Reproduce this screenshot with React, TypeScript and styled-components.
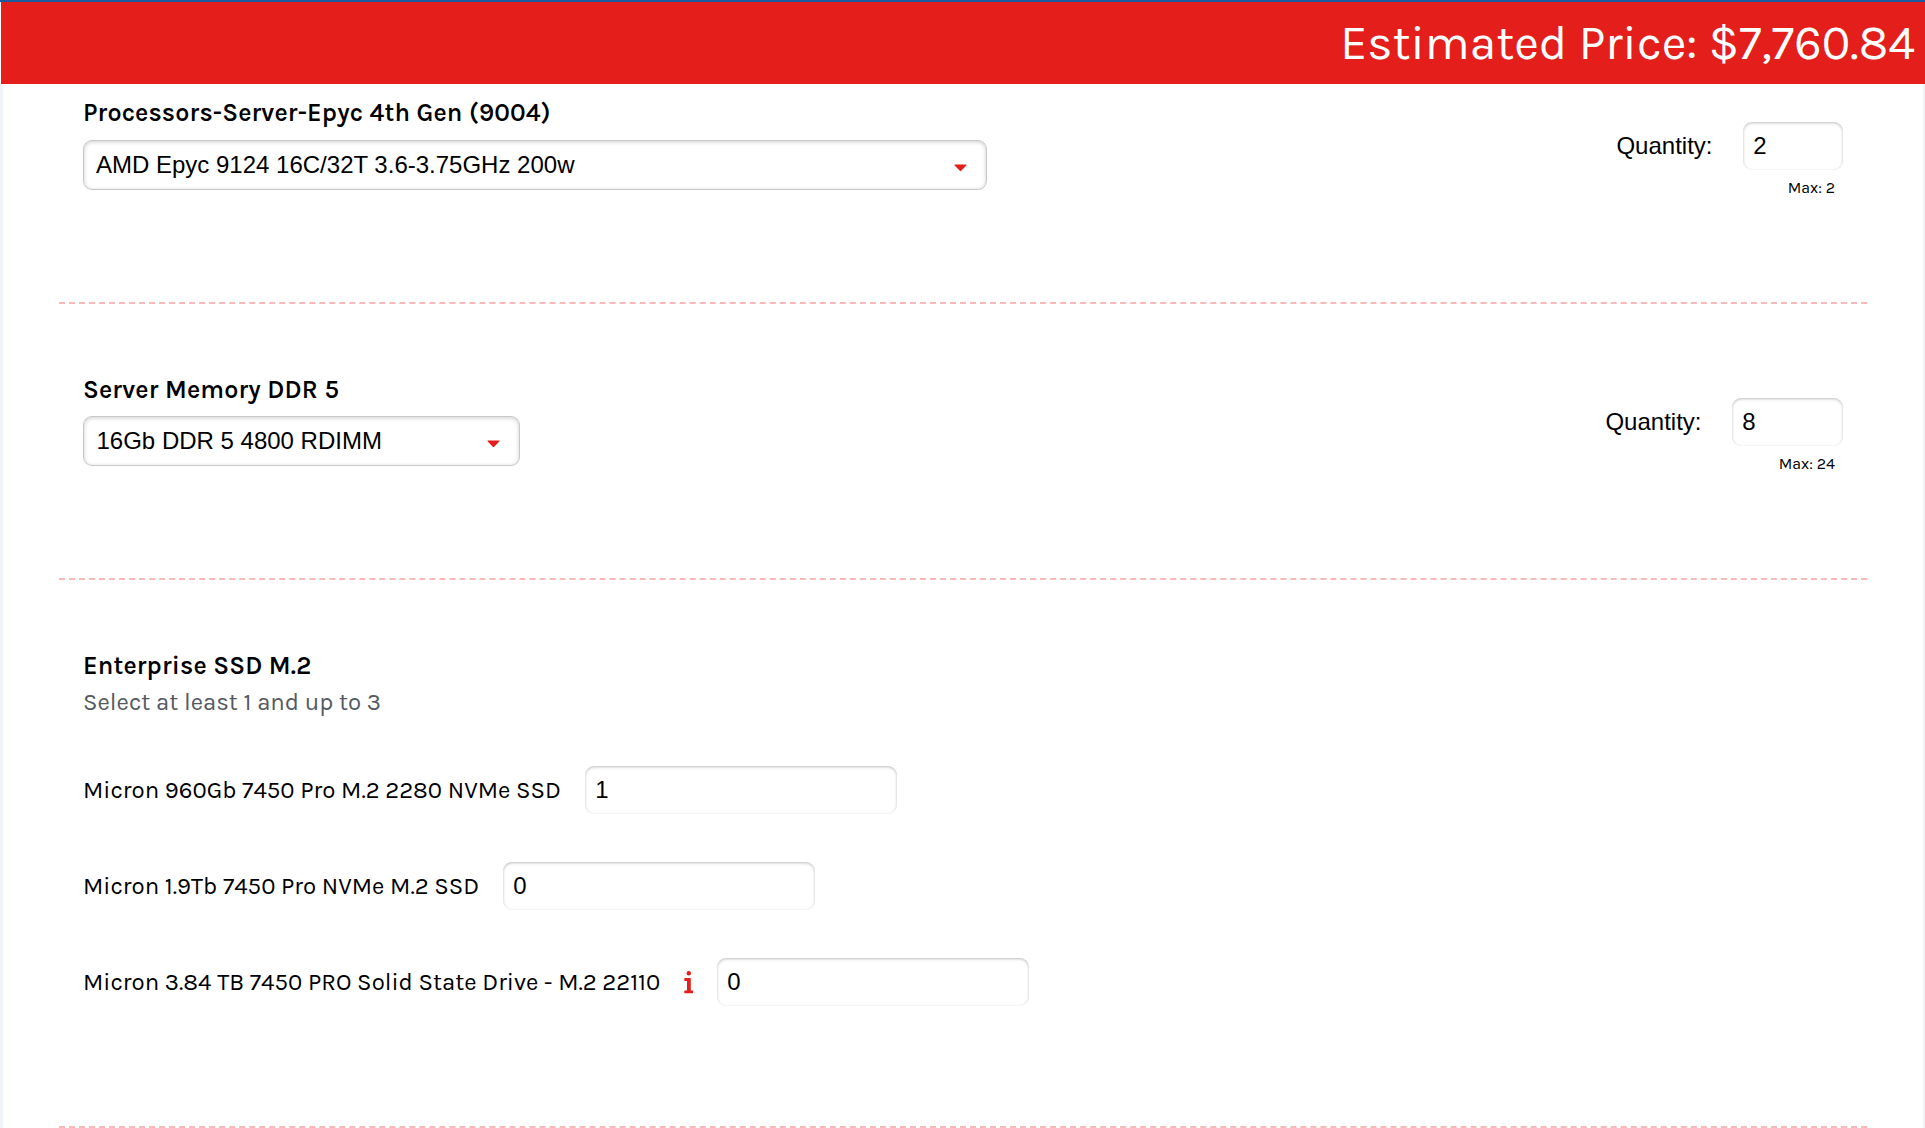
import React from 'react';
import styled, { createGlobalStyle } from 'styled-components';

const sans = '"Karla", "Inter", "Liberation Sans", sans-serif';
const arial = '"Liberation Sans", Arial, sans-serif';
const red = '#e31e1b';

const GlobalStyle = createGlobalStyle`
  * { box-sizing: border-box; }
  body { margin: 0; background: #fff; }
`;

const Page = styled.div`
  display: flex;
  flex-direction: column;
  height: 1128px;
  overflow: hidden;
  color: #000;
  font-family: ${sans};
`;

const PriceBar = styled.header`
  flex: none;
  height: 84px;
  padding-right: 10px;
  border-top: 2px solid #1a5a9d;
  background: linear-gradient(to right, #fff 1px, ${red} 1px);
  color: #fff;
  font-size: 48px;
  line-height: 82px;
  text-align: right;
`;

const Form = styled.main`
  flex: 1;
  padding: 0 56px;
  border: solid #f0f4f9;
  border-width: 0 2px 0 3px;
`;

const Section = styled.section<{ $height: number; $top: number }>`
  display: flex;
  justify-content: space-between;
  height: ${(p) => p.$height}px;
  padding: ${(p) => p.$top}px 24px 0;
`;

const Group = styled.div`
  display: flex;
  flex-direction: column;
  align-items: flex-start;
`;

const Divider = styled.hr`
  height: 0;
  margin: 0;
  border: 0;
  border-top: 2px dashed #f8b9b8;
`;

const Title = styled.h2<{ $lift?: number }>`
  margin: ${(p) => -(p.$lift ?? 0)}px 0 ${(p) => p.$lift ?? 0}px;
  font-size: 25.2px;
  font-weight: 600;
  line-height: 36px;
  letter-spacing: 0.15px;
`;

const Hint = styled.p`
  margin: 3px 0 49px;
  color: #555a61;
  font-size: 24px;
  line-height: 30px;
`;

const Select = styled.button<{ $width: number; $indent: number }>`
  display: flex;
  align-items: center;
  justify-content: space-between;
  width: ${(p) => p.$width}px;
  height: 50px;
  margin-top: 8px;
  padding: 0 19px 0 ${(p) => p.$indent}px;
  border: 1px solid #c8c8c8;
  border-radius: 9px;
  background: #fff;
  box-shadow: inset 0 1px 4px rgba(0, 0, 0, 0.2);
  color: #000;
  font: 24px ${arial};
`;

const CaretIcon = styled.svg`
  width: 13px;
  height: 8px;
  margin-top: 6px;
  fill: ${red};
`;

const Quantity = styled.div`
  display: flex;
  flex-direction: column;
  align-items: flex-end;
  padding-top: 26px;
`;

const QuantityField = styled.label`
  display: flex;
  align-items: center;
  gap: 30.5px;
  font: 24px ${arial};
`;

const QuantityLabel = styled.span`
  padding-bottom: 1px;
`;

const NumberInput = styled.input<{ $width: number }>`
  width: ${(p) => p.$width}px;
  height: 48px;
  padding: 0 10px 1px 10.3px;
  border: 0;
  border-radius: 9px;
  outline: 0;
  background: #fff;
  box-shadow: inset 0 1px 3px rgba(0, 0, 0, 0.27);
  color: #000;
  font: 24px ${arial};
`;

const Max = styled.span`
  margin-top: 8px;
  padding-right: 8px;
  font-size: 16px;
  line-height: 20px;
`;

const PartList = styled.div`
  display: flex;
  flex-direction: column;
  gap: 48px;
`;

const PartRow = styled.label`
  display: flex;
  align-items: center;
  height: 48px;
`;

const PartName = styled.span<{ $width: number }>`
  width: ${(p) => p.$width}px;
  font-size: 24px;
  line-height: 48px;
  white-space: nowrap;
`;

const InfoIcon = styled.svg`
  width: 10px;
  height: 23px;
  margin-right: 23px;
  fill: ${red};
`;

const Caret = () => (
  <CaretIcon viewBox="0 0 13 8">
    <path d="M1 0.5h11q1 0 .3.9L7.2 6.8q-.7.8-1.4 0L.7 1.4Q0 .5 1 .5Z" />
  </CaretIcon>
);

const Info = () => (
  <InfoIcon viewBox="0 0 10 23">
    <circle cx="4.8" cy="2.2" r="2.2" />
    <path d="M1 7h5.1q.7 0 .7.7v11.8h1.6q.7 0 .7.7v1.4q0 .7-.7.7H1q-.7 0-.7-.7v-1.4q0-.7.7-.7h2V10H1q-.7 0-.7-.7V7.7Q.3 7 1 7Z" />
  </InfoIcon>
);

const choices = [
  { title: 'Processors-Server-Epyc 4th Gen (9004)', lift: 1, value: 'AMD Epyc 9124 16C/32T 3.6-3.75GHz 200w', width: 904, indent: 12, quantity: 2, max: 2, field: 100, height: 218, top: 12 },
  { title: 'Server Memory DDR 5', lift: 0, value: '16Gb DDR 5 4800 RDIMM', width: 437, indent: 12.5, quantity: 8, max: 24, field: 111, height: 274, top: 68 },
];

const drives = [
  { name: 'Micron 960Gb 7450 Pro M.2 2280 NVMe SSD', width: 502, quantity: 1 },
  { name: 'Micron 1.9Tb 7450 Pro NVMe M.2 SSD', width: 420, quantity: 0 },
  { name: 'Micron 3.84 TB 7450 PRO Solid State Drive - M.2 22110', width: 601, quantity: 0, info: true },
];

export default function App() {
  return (
    <Page>
      <GlobalStyle />
      <PriceBar>Estimated Price: $7,760.84</PriceBar>
      <Form>
        {choices.map((c) => (
          <React.Fragment key={c.title}>
            <Section $height={c.height} $top={c.top}>
              <Group>
                <Title $lift={c.lift}>{c.title}</Title>
                <Select type="button" $width={c.width} $indent={c.indent}>
                  {c.value}
                  <Caret />
                </Select>
              </Group>
              <Quantity>
                <QuantityField>
                  <QuantityLabel>Quantity:</QuantityLabel>
                  <NumberInput $width={c.field} defaultValue={c.quantity} />
                </QuantityField>
                <Max>Max: {c.max}</Max>
              </Quantity>
            </Section>
            <Divider />
          </React.Fragment>
        ))}
        <Section $height={546} $top={68}>
          <Group>
            <Title>Enterprise SSD M.2</Title>
            <Hint>Select at least 1 and up to 3</Hint>
            <PartList>
              {drives.map((d) => (
                <PartRow key={d.name}>
                  <PartName $width={d.width}>{d.name}</PartName>
                  {d.info && <Info />}
                  <NumberInput $width={312} defaultValue={d.quantity} />
                </PartRow>
              ))}
            </PartList>
          </Group>
        </Section>
        <Divider />
      </Form>
    </Page>
  );
}
